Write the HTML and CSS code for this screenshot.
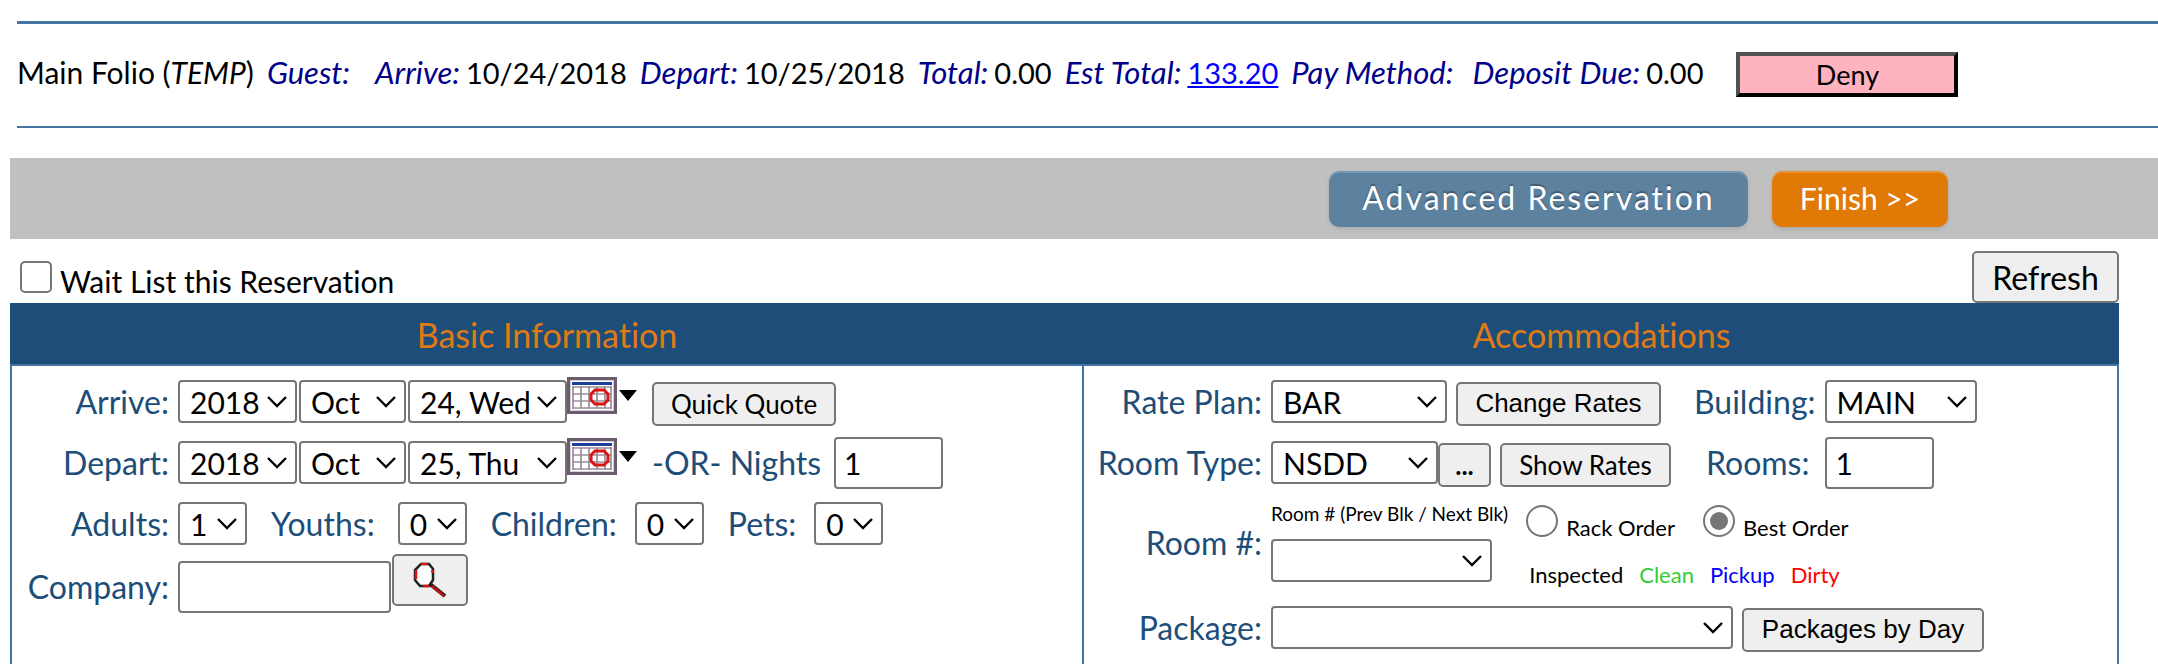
FILE: index.html
```html
<!DOCTYPE html>
<html lang="en">
<head>
<meta charset="utf-8">
<title>Reservation</title>
<link rel="stylesheet" href="styles.css">
</head>
<body>
<svg class="defs" aria-hidden="true">
  <symbol id="calendar" viewBox="0 0 50 37">
    <rect x="1.5" y="1.5" width="47" height="34" fill="#fff" stroke="#6b5b6e" stroke-width="3"/>
    <rect x="3.5" y="3.5" width="43" height="30" fill="none" stroke="#d5cfd8" stroke-width="1"/>
    <rect x="5" y="5" width="40" height="3" fill="#1c3f9c"/>
    <path d="M6 9V32M14 9V32M22 9V32M30 9V32M38 9V32M44 9V32M5 10H45M5 17H45M5 24H45M5 31H45" stroke="#9a8f9a" stroke-width="1.7" fill="none"/>
    <path d="M28 13H37L41 17V23L37 27H28L24 23V17Z" fill="none" stroke="#d81515" stroke-width="3"/>
  </symbol>
</svg>
<section class="folio">
  <div class="facts">
    <span class="name">Main Folio (<em>TEMP</em>)</span>
    <span class="fact guest"><em>Guest:</em></span>
    <span class="fact"><em>Arrive:</em>10/24/2018</span>
    <span class="fact"><em>Depart:</em>10/25/2018</span>
    <span class="fact"><em>Total:</em>0.00</span>
    <span class="fact"><em>Est Total:</em><a href="#">133.20</a></span>
    <span class="fact"><em>Pay Method:</em></span>
    <span class="fact"><em>Deposit Due:</em>0.00</span>
  </div>
  <button class="deny" type="button">Deny</button>
</section>
<div class="actions">
  <button class="action advanced" type="button">Advanced Reservation</button>
  <button class="action finish" type="button">Finish &gt;&gt;</button>
</div>
<form class="main">
  <div class="topline">
    <label class="wait"><input class="check" type="checkbox">Wait List this Reservation</label>
    <button class="btn refresh" type="button">Refresh</button>
  </div>
  <div class="panels">
    <section class="panel">
      <h2 class="title">Basic Information</h2>
      <div class="body basic">
        <div class="row">
          <label class="label" for="ay">Arrive:</label>
          <div class="dates">
            <select id="ay" class="year"><option>2018</option></select>
            <select class="month" aria-label="Arrival month"><option>Oct</option></select>
            <select class="day" aria-label="Arrival day"><option>24, Wed</option></select>
          </div>
          <button class="cal" type="button" aria-label="Pick arrival date"><svg width="50" height="37"><use href="#calendar"/></svg><svg class="tri" width="18" height="11" viewBox="0 0 18 11"><path d="M0 0H18L9 11Z"/></svg></button>
          <button class="btn low quote" type="button">Quick Quote</button>
        </div>
        <div class="row">
          <label class="label" for="dy">Depart:</label>
          <div class="dates">
            <select id="dy" class="year"><option>2018</option></select>
            <select class="month" aria-label="Departure month"><option>Oct</option></select>
            <select class="day" aria-label="Departure day"><option>25, Thu</option></select>
          </div>
          <button class="cal" type="button" aria-label="Pick departure date"><svg width="50" height="37"><use href="#calendar"/></svg><svg class="tri" width="18" height="11" viewBox="0 0 18 11"><path d="M0 0H18L9 11Z"/></svg></button>
          <label class="nights" for="nights">-OR- Nights</label>
          <input id="nights" class="text num" type="text" value="1">
        </div>
        <div class="row">
          <label class="label" for="adults">Adults:</label>
          <select id="adults" class="count"><option>1</option></select>
          <label class="sub youths" for="youths">Youths:</label>
          <select id="youths" class="count"><option>0</option></select>
          <label class="sub" for="children">Children:</label>
          <select id="children" class="count"><option>0</option></select>
          <label class="sub" for="pets">Pets:</label>
          <select id="pets" class="count"><option>0</option></select>
        </div>
        <div class="row company-row">
          <label class="label" for="company">Company:</label>
          <input id="company" class="text company" type="text">
          <button class="btn search" type="button" aria-label="Find company"><svg width="34" height="36" viewBox="0 0 34 36"><path d="M8 2H16L20 7V18L16 24H7L2 18V8Z" fill="#fff" stroke="#222" stroke-width="2.5"/><path d="M8 2H15M3 8V17M10 24H16M19 8L20 11" fill="none" stroke="#e11212" stroke-width="2.5"/><path d="M17 22L32 34" stroke="#222" stroke-width="4"/><path d="M19 24L31 34" stroke="#c41010" stroke-width="2.5"/></svg></button>
        </div>
      </div>
    </section>
    <section class="panel">
      <h2 class="title">Accommodations</h2>
      <div class="body rooms">
        <div class="row">
          <label class="label" for="rate">Rate Plan:</label>
          <select id="rate" class="rate"><option>BAR</option></select>
          <button class="btn low arial gap change" type="button">Change Rates</button>
          <label class="side" for="building">Building:</label>
          <select id="building" class="building"><option>MAIN</option></select>
        </div>
        <div class="row">
          <label class="label" for="type">Room Type:</label>
          <select id="type" class="type"><option>NSDD</option></select>
          <button class="btn low dots" type="button"><b>...</b></button>
          <button class="btn low gap show" type="button">Show Rates</button>
          <label class="side count-label" for="roomcount">Rooms:</label>
          <input id="roomcount" class="text num" type="text" value="1">
        </div>
        <div class="row room-row">
          <label class="label" for="room">Room #:</label>
          <div class="room-pick">
            <span>Room # (Prev Blk / Next Blk)</span>
            <select id="room" class="room"><option></option></select>
          </div>
          <div class="room-opts">
            <div class="orders">
              <label class="order"><input class="radio" type="radio" name="order"><span>Rack Order</span></label>
              <label class="order"><input class="radio" type="radio" name="order" checked><span>Best Order</span></label>
            </div>
            <div class="states"><span>Inspected</span><span class="clean">Clean</span><span class="pickup">Pickup</span><span class="dirty">Dirty</span></div>
          </div>
        </div>
        <div class="row">
          <label class="label" for="package">Package:</label>
          <select id="package" class="package"><option></option></select>
          <button class="btn low arial gap packages" type="button">Packages by Day</button>
        </div>
      </div>
    </section>
  </div>
</form>
</body>
</html>
```
FILE: styles.css
```css
* { box-sizing: border-box; }
html { overflow: hidden; }
body {
  margin: 0;
  padding: 21px 0 0 10px;
  background: #fff;
  color: #000;
  font-family: Lato, "Liberation Sans", sans-serif;
  font-size: 30px;
  font-variant-ligatures: none;
}
button, input, select { margin: 0; font-family: inherit; color: #000; flex: none; }
.defs { display: none; }

.folio {
  display: flex;
  align-items: center;
  gap: 33px;
  height: 107px;
  margin-left: 7px;
  padding-bottom: 2px;
  border-top: 3px solid #4775a3;
  border-bottom: 2px solid #4775a3;
}
.facts {
  display: flex;
  align-items: baseline;
  gap: 13px;
  padding-bottom: 4px;
  white-space: nowrap;
}
.fact { font-size: 29px; }
.fact em { margin-right: 6px; color: #00008b; font-size: 31px; }
.guest { margin-right: 6px; }
.fact a { color: #00f; }
.deny {
  width: 222px;
  height: 45px;
  padding: 0;
  border: 4px outset #000;
  border-color: #4f5353 #000 #000 #4f5353;
  background: #ffb3be;
  font-size: 27px;
}

.actions {
  display: flex;
  align-items: center;
  gap: 24px;
  height: 81px;
  margin-top: 30px;
  padding-left: 1319px;
  background: #c0c0c0;
}
.action {
  height: 56px;
  padding: 0 0 2px;
  border: 0;
  border-radius: 10px;
  color: #fff;
  font-size: 30px;
  box-shadow: inset 0 2px 0 rgba(255, 255, 255, .18), 0 2px 4px rgba(0, 0, 0, .1);
}
.advanced {
  width: 419px;
  background: #5c82a0;
  font-size: 32px;
  letter-spacing: 2px;
  text-shadow: 0 -2px 1px rgba(0, 0, 0, .3);
}
.finish { width: 176px; background: #e07a05; }

.main { margin-right: 39px; }
.topline {
  display: flex;
  justify-content: space-between;
  align-items: flex-end;
  height: 64px;
}
.wait { display: flex; align-items: center; gap: 8px; padding: 0 0 2px 10px; line-height: 36px; }
.check {
  appearance: none;
  width: 32px;
  height: 32px;
  margin-bottom: 8px;
  border: 2px solid #767676;
  border-radius: 5px;
}
.btn {
  padding: 0;
  border: 2px solid #767676;
  border-radius: 5px;
  background: #efefef;
  height: 44px;
  font-size: 26px;
}
.low { margin-top: 4px; }
.refresh { width: 147px; height: 52px; font-size: 32px; }

.panels { display: grid; grid-template-columns: 1074fr 1035fr; }
.panel { display: flex; flex-direction: column; }
.title {
  height: 63px;
  margin: 0;
  border-bottom: 2px solid #4775a3;
  background: #1c4e79;
  color: #e07a14;
  font-size: 34px;
  font-weight: 400;
  line-height: 64px;
  text-align: center;
}
.body {
  min-height: 320px;
  padding-top: 5px;
  border: 2px solid #4775a3;
  border-width: 0 2px;
  color: #1c4e79;
  font-size: 32px;
}
.rooms { border-left: 0; }
.row { display: flex; align-items: center; height: 61px; white-space: nowrap; }
.company-row { height: 65px; }
.label { flex: none; width: 157px; margin-right: 9px; text-align: right; }
.rooms .label { width: 178px; }

select {
  appearance: none;
  height: 43px;
  padding: 0 0 0 10px;
  border: 2px solid #767676;
  border-radius: 4px;
  background: #fff url("data:image/svg+xml,%3Csvg xmlns='http://www.w3.org/2000/svg' width='20' height='12'%3E%3Cpath d='M1 1L10 10L19 1' fill='none' stroke='black' stroke-width='2.4'/%3E%3C/svg%3E") no-repeat right 8px center;
  font-size: 30px;
}
.text {
  height: 52px;
  padding: 0 8px;
  border: 2px solid #767676;
  border-radius: 4px;
  background: #fff;
  font-size: 30px;
}
.dates { display: flex; gap: 2px; }
.year { width: 119px; }
.month { width: 107px; }
.day { width: 159px; }
.cal {
  display: flex;
  align-items: center;
  gap: 2px;
  margin-bottom: 13px;
  padding: 0;
  border: 0;
  background: none;
}
.quote { width: 184px; margin-left: 15px; }
.nights { margin: 0 13px 0 15px; }
.num { width: 109px; }
.count { width: 69px; }
.sub { margin: 0 18px 0 24px; }
.youths { margin-right: 23px; }
.company { width: 213px; }
.search { display: grid; place-items: center; width: 76px; height: 52px; margin: 0 0 14px 1px; }

.gap { margin-left: 9px; }
.arial { font-family: "Liberation Sans", Arial, sans-serif; }
.rate { width: 176px; }
.change { width: 205px; }
.type { width: 167px; }
.dots { width: 53px; }
.show { width: 171px; }
.side { margin: 0 9px 0 33px; }
.count-label { margin: 0 16px 0 35px; }
.building { width: 152px; }
.room-row { height: 104px; padding-bottom: 6px; color: #000; font-size: 22px; }
.room-row .label { color: #1c4e79; font-size: 32px; }
.room-pick { display: flex; flex-direction: column; gap: 14px; align-items: flex-start; font-size: 19px; }
.room { width: 221px; }
.room-opts { display: flex; flex-direction: column; gap: 20px; margin-left: 18px; padding-top: 4px; }
.orders { display: flex; gap: 28px; }
.order { display: flex; align-items: center; gap: 8px; }
.order span { padding-top: 14px; }
.radio {
  appearance: none;
  width: 32px;
  height: 32px;
  border: 2px solid #767676;
  border-radius: 50%;
}
.radio:checked { background: #767676; background-clip: content-box; padding: 5px; }
.states { display: flex; gap: 16px; padding-left: 3px; }
.clean { color: #32cd32; }
.pickup { color: #00f; }
.dirty { color: #f00; }
.package { width: 462px; }
.packages { width: 242px; }
```
